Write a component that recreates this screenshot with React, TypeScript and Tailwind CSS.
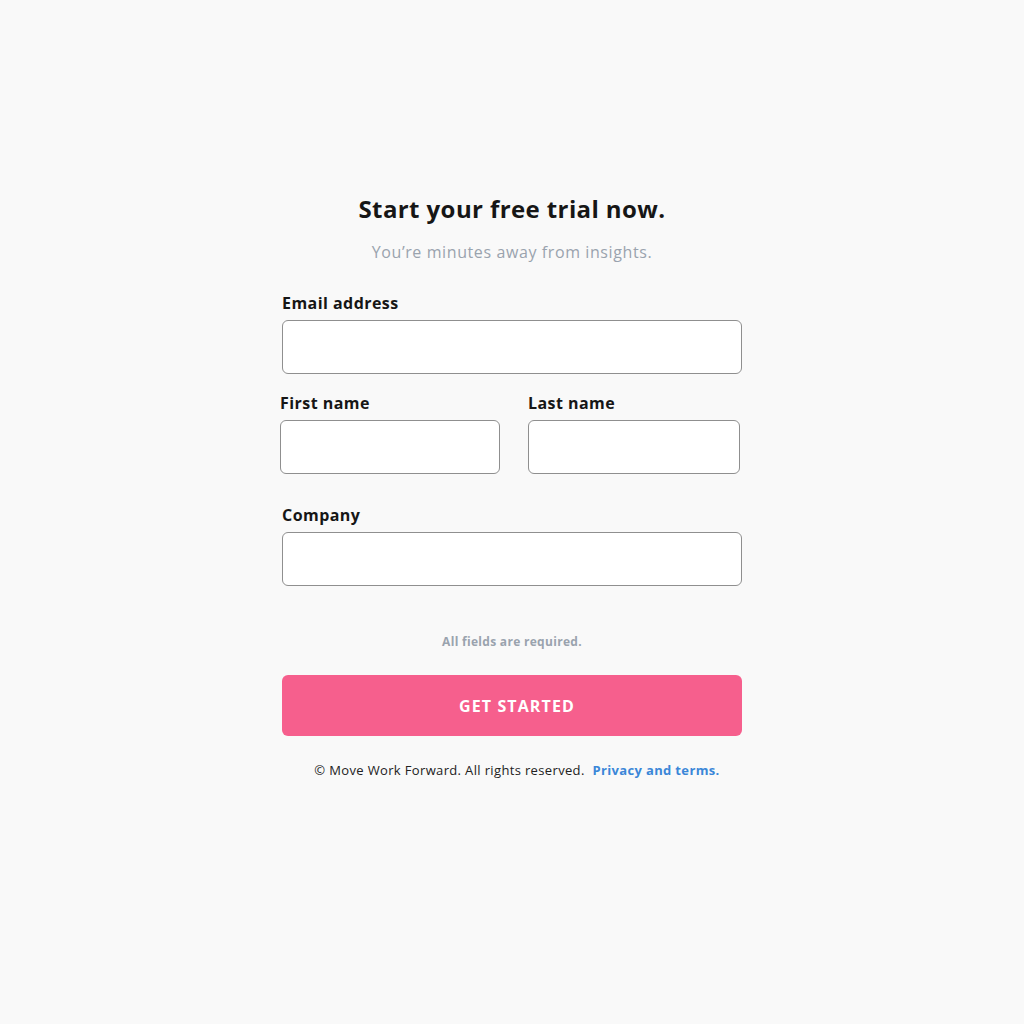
import React from 'react';

const font = { fontFamily: '"Open Sans", "Noto Sans", sans-serif' };

const Field: React.FC<{ label: string; width?: string }> = ({ label, width = 'w-full' }) => (
  <label className={`flex flex-col ${width}`}>
    <span className="text-[16px] font-bold leading-[20px] tracking-[0.45px] text-[#161616]">{label}</span>
    <input
      type="text"
      className="mt-[7px] h-[54px] w-full rounded-[6px] border border-[#8f8f8f] bg-white px-3 outline-none"
    />
  </label>
);

export default function App() {
  return (
    <div className="min-h-screen w-full bg-[#f9f9f9]" style={font}>
      <div className="mx-auto flex w-[460px] flex-col pt-[194px]">
        <h1 className="text-center text-[24px] font-bold leading-[30px] tracking-[0.4px] text-[#161616]">
          Start your free trial now.
        </h1>
        <p className="mt-[18px] text-center text-[16px] leading-[20px] tracking-[0.6px] text-[#9aa3ae]">
          You’re minutes away from insights.
        </p>

        <div className="mt-[31px]">
          <Field label="Email address" />
        </div>

        <div className="ml-[-2px] mt-[19px] flex gap-[28px]">
          <Field label="First name" width="w-[220px]" />
          <Field label="Last name" width="w-[212px]" />
        </div>

        <div className="mt-[31px]">
          <Field label="Company" />
        </div>

        <p className="mt-[48px] text-center text-[12px] font-bold leading-[16px] tracking-[0.3px] text-[#9aa3ae]">
          All fields are required.
        </p>

        <button className="mt-[25px] h-[61px] w-full rounded-[6px] bg-[#f65f8d] pl-[10px] text-[16px] font-bold uppercase tracking-[1.1px] text-white">
          Get started
        </button>

        <p className="mt-[26px] pl-[10px] text-center text-[13px] leading-[16px] tracking-[0.35px] text-[#222]">
          © Move Work Forward. All rights reserved.{' '}
          <a href="#" className="ml-1 font-bold text-[#3b87d8]">
            Privacy and terms.
          </a>
        </p>
      </div>
    </div>
  );
}
